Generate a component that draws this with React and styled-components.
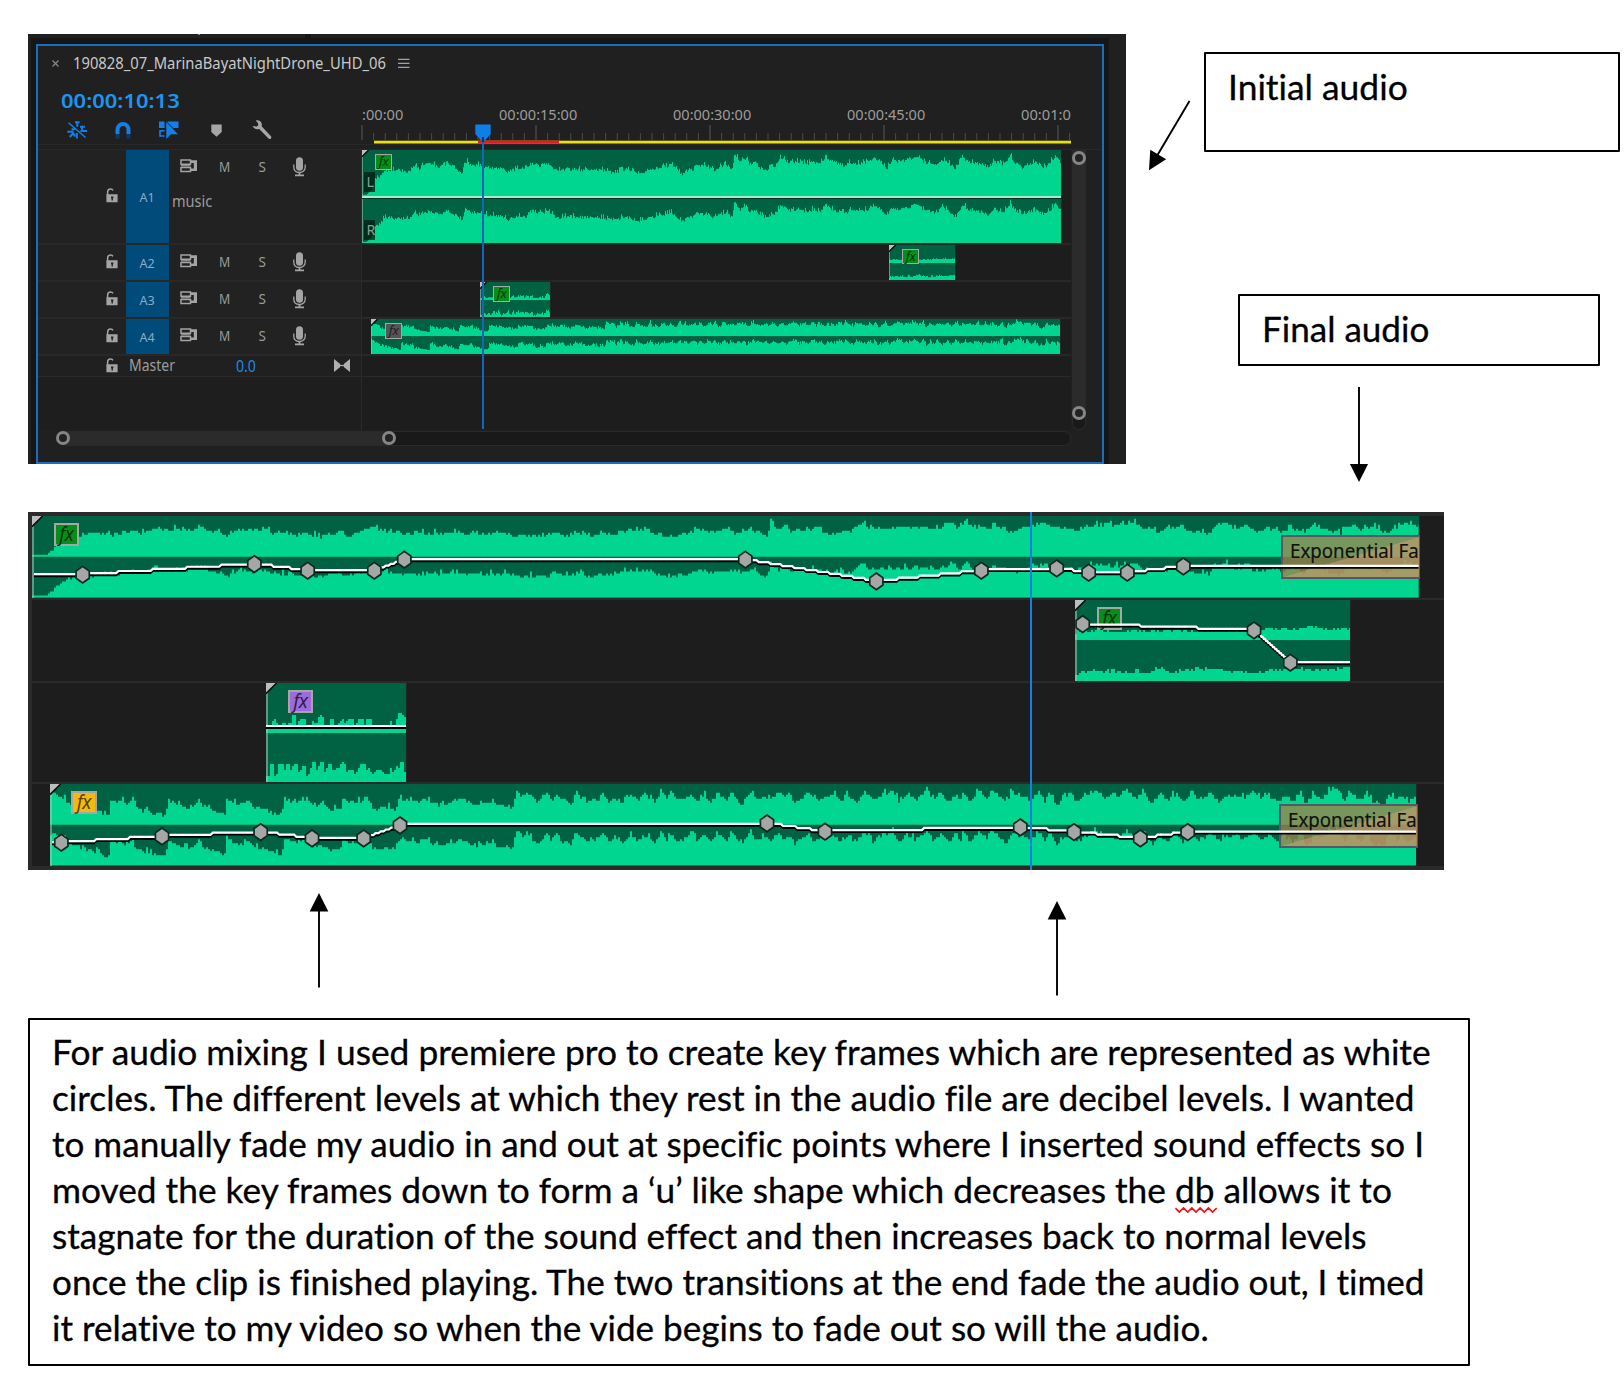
import React, { useLayoutEffect, useRef, useState } from "react";
import styled, { createGlobalStyle } from "styled-components";

const DARK = "#006242";
const LIGHT = "#00d690";

const GlobalStyle = createGlobalStyle`
  *, *::before, *::after { box-sizing: border-box; }
  html, body { margin: 0; padding: 0; background: #fff; }
  svg { display: block; flex: none; }
`;

/* ---------- text that is condensed to a measured width ---------- */

const FitBox = styled.span`
  display: block;
  flex: none;
  width: ${(p) => p.$w}px;
  white-space: nowrap;
`;
const FitInner = styled.span`
  display: inline-block;
  transform-origin: 0 50%;
  white-space: nowrap;
`;
function Fit({ w, children }) {
  const ref = useRef(null);
  const [scale, setScale] = useState(1);
  useLayoutEffect(() => {
    if (ref.current) setScale(w / ref.current.offsetWidth);
  }, [w]);
  return (
    <FitBox $w={w}>
      <FitInner ref={ref} style={{ transform: `scaleX(${scale})` }}>{children}</FitInner>
    </FitBox>
  );
}

/* ---------- waveform data ---------- */

const trace = (originX, base, str) =>
  str.trim().split(/\s+/).map((p) => {
    const [x, y] = p.split(",").map(Number);
    return [originX + x / 3, (base - y) / 3];
  });

const MUSIC_SMALL = [
  ...trace(360, 318, `8,315 20,314 35,300 46,262 60,258 75,240 95,240 120,240 148,246 155,232 165,228 180,236 186,222 220,222 232,230 245,228 256,226 260,211 270,225 285,230 300,246 308,246 312,224 322,214 335,225 365,225 375,230 390,232 408,235 425,234 442,248 455,240 475,236 500,236 510,222 525,218 535,226 565,222 575,230 600,240 625,236 650,238 670,240 700,236 740,244 760,246 800,238 830,248 855,250 865,234 880,240 900,228 915,230 935,224 945,234 955,244 968,252 985,238 1000,238 1010,222 1030,228 1045,226 1050,236 1065,240 1080,230 1100,224 1118,238 1123,190 1130,198 1140,215 1150,210 1160,205 1169,222`),
  ...trace(750, 318, `0,220 20,216 30,232 50,238 75,228 95,200 110,214 130,218 150,212 170,222 190,214 210,222 228,196 240,212 265,220 285,226 300,218 330,220 350,216 370,202 395,215 412,234 425,210 450,214 475,208 505,197 520,216 545,222 560,226 575,208 590,214 618,236 640,200 655,214 670,220 700,222 715,232 735,212 760,226 782,196 795,216 820,232 840,220 865,218 885,232 900,218 918,196 930,215`),
];

const MUSIC_LARGE = [
  ...trace(20, 155, `36,150 80,150 84,143 100,135 108,120 140,100 180,90 200,84 215,90 240,84 260,88 310,86 330,80 345,75 360,82 375,84 390,70 410,68 430,74 470,72 500,74 520,72 545,64 560,72 590,78 610,84 625,94 640,80 655,72 685,76 740,72 755,82 775,80 800,88 815,82 835,92 850,80 900,94 920,88 950,84 962,78 985,90 1010,82 1030,74 1065,70 1100,76 1140,86 1200,84 1250,84 1310,76 1330,86 1379,84`),
  ...trace(480, 155, `0,90 20,84 80,82 110,92 160,90 200,94 220,80 260,88 300,82 340,95 365,84 390,88 430,78 450,74 490,74 500,68 520,80 560,95 600,86 620,88 650,70 690,80 740,74 770,86 815,70 840,84 864,90 868,65 872,42 885,60 900,76 915,55 935,80 950,68 985,76 1010,64 1030,80 1055,88 1080,76 1115,80 1130,62 1148,48 1165,68 1200,66 1230,70 1260,64 1300,66 1330,64 1360,70 1400,60 1418,46 1435,70`),
  ...trace(960, 155, `0,68 20,48 40,72 60,64 80,70 115,60 140,76 180,74 215,62 250,54 280,64 320,66 350,76 385,60 430,58 480,60 530,52 550,72 560,66 590,80 625,70 660,62 690,76 745,86 765,66 795,48 820,70 860,60 890,78 930,68 960,80 1000,68 1035,78 1065,52 1090,72 1140,84 1165,62 1200,70 1250,66 1280,82 1310,66 1335,48 1375,65`),
];

const AMBIENCE = [
  ...trace(20, 960, `90,865 105,862 120,875 135,880 150,905 165,900 225,920 240,918 255,930 268,934 270,884 285,890 300,884 320,896 340,880 348,912 370,916 400,925 440,932 443,884 455,890 480,900 500,905 520,905 537,885 555,910 580,915 600,925 615,925 618,880 635,885 655,900 690,886 697,905 730,912 760,925 788,928 792,880 815,888 840,890 865,885 885,905 910,898 930,912 962,912 968,880 990,890 1020,888 1045,888 1060,905 1075,915 1100,905 1130,912 1138,880 1160,885 1200,892 1230,878 1235,895 1275,900 1320,880 1345,890 1370,902 1379,900`),
  ...trace(480, 960, `0,896 30,890 60,905 104,905 106,850 116,862 130,876 150,866 170,895 190,880 200,858 215,892 232,865 250,892 278,895 288,855 300,875 320,885 355,885 372,860 385,890 410,880 425,895 455,870 475,885 495,868 525,892 547,855 560,885 577,868 600,890 635,862 650,885 672,868 690,890 720,865 740,885 755,860 775,890 790,898 808,860 830,880 860,875 875,885 895,862 915,880 930,868 945,895 985,860 1000,882 1050,878 1060,865 1080,890 1103,868 1130,892 1155,860 1180,890 1200,870 1240,858 1260,892 1280,865 1310,885 1338,855 1360,885 1385,868 1410,892 1430,865`),
  ...trace(960, 960, `0,890 10,865 30,890 60,855 80,880 97,853 120,880 140,890 155,862 190,875 215,885 240,860 255,890 270,862 290,898 330,865 350,885 375,875 410,855 435,880 450,868 470,880 500,855 530,878 555,862 575,900 595,870 620,885 645,868 670,890 700,862 720,890 755,862 775,888 800,870 830,875 860,880 880,862 905,885 925,868 950,890 975,870 1000,890 1025,855 1035,895 1050,895 1060,868 1085,880 1110,855 1140,858 1155,885 1170,856 1200,885 1220,865 1240,895 1275,900 1285,862 1310,885 1325,868 1345,895 1368,868`),
];
const AMBIENCE_SMALL = AMBIENCE.map(([x, h]) => [371 + ((x - 50) * 689) / 1366, h * 0.42]);

const EFFECT_L = trace(20, 683, `738,665 755,665 758,645 770,640 772,662 788,662 790,640 797,662 815,650 818,632 828,632 830,660 842,642 855,640 857,665 872,665 875,642 890,655 895,640 905,625 912,640 914,660 928,660 930,640 942,640 945,660 962,650 966,632 975,655 988,640 1003,640 1005,660 1018,640 1032,640 1034,660 1042,640 1053,640 1055,662 1085,662 1112,655 1114,640 1120,660 1130,655 1132,630 1141,620 1150,628 1157,640`);
const EFFECT_R = trace(20, 831, `738,812 748,812 750,780 763,780 765,812 775,800 777,780 790,780 792,812 798,780 808,780 812,795 822,780 834,780 836,805 848,785 858,785 860,812 872,808 874,774 886,774 888,802 900,774 910,774 912,805 925,780 937,780 940,800 960,785 966,768 975,776 978,802 990,790 1003,800 1006,812 1020,780 1035,780 1037,805 1048,785 1055,808 1075,792 1090,800 1105,812 1112,785 1120,800 1135,780 1139,795 1141,774 1150,774 1152,800 1157,800`);
const EFFECT_SMALL = EFFECT_L.map(([x, h]) => [480 + (x - 266) * 0.5, h * 0.3]);
const DRONE_L = trace(960, 405, `345,398 350,378 400,376 470,380 560,378 700,378 860,376 920,372 1000,372 1038,370 1042,362 1058,364 1064,371 1130,374 1169,370`);
const DRONE_R = trace(960, 528, `345,522 352,512 362,500 400,498 480,500 520,504 532,492 545,506 570,502 590,490 640,502 700,494 760,492 800,498 890,504 925,496 1000,492 1080,496 1140,492 1169,486`);
const shrink = (pts) => pts.map(([x, h]) => [888.5 + (x - 1075) * 0.24, h * 0.38]);

function levelAt(pts, x) {
  if (x <= pts[0][0]) return pts[0][1];
  for (let i = 1; i < pts.length; i++) {
    if (x <= pts[i][0]) {
      const [ax, ay] = pts[i - 1];
      const [bx, by] = pts[i];
      return ay + ((by - ay) * (x - ax)) / (bx - ax || 1);
    }
  }
  return pts[pts.length - 1][1];
}

function wavePath({ pts, base, noise = 0, seed = 7 }, x0, width, step) {
  let s = seed * 7919;
  let d = `M0 ${base}`;
  for (let x = 0; x < width; x += step) {
    s = (s * 1103515245 + 12345) % 2147483648;
    const r = s / 2147483648;
    const quiet = levelAt(pts, x0 + x) < 6 && noise > 1;
    const jitter = quiet ? 0 : (r - 0.5) * 2 * noise + (r > 0.9 ? noise * 0.9 : 0);
    const raw = levelAt(pts, x0 + x + step / 2) + jitter;
    const h = Math.max(0.8, step > 1 ? Math.round(raw / 2) * 2 : Math.round(raw * 1.5) / 1.5);
    d += `V${(base - h).toFixed(1)}H${Math.min(width, x + step)}`;
  }
  return `${d}V${base}Z`;
}

function Wave({ x0, width, height, channels, step }) {
  return (
    <svg width={width} height={height} viewBox={`0 0 ${width} ${height}`}>
      {channels.map((c, i) => (
        <path key={i} d={wavePath(c, x0, width, step)} fill={LIGHT} />
      ))}
    </svg>
  );
}

/* ---------- clips ---------- */

const ClipBox = styled.div`
  position: relative;
  flex: none;
  width: ${(p) => p.$w}px;
  height: ${(p) => p.$h}px;
  margin-left: ${(p) => p.$start}px;
  background: ${DARK};
  box-shadow: 1px 0 0 #262626;
  &::before {
    content: "";
    position: absolute;
    left: 0;
    top: 0;
    bottom: 0;
    width: ${(p) => (p.$big ? 2 : 1)}px;
    background: #a9c9bc;
    opacity: 0.55;
  }
`;
const Fold = styled.svg`
  position: absolute;
  left: 0;
  top: 0;
`;
const FxBadge = styled.span`
  position: absolute;
  left: ${(p) => p.$x}px;
  top: ${(p) => p.$y}px;
  width: ${(p) => (p.$big ? 25.5 : 17)}px;
  height: ${(p) => (p.$big ? 23.5 : 15.5)}px;
  border: ${(p) => (p.$big ? 2 : 1.5)}px solid #a6a6a6;
  background: ${(p) => p.$bg};
  color: ${(p) => p.$ink || "#04360b"};
  font: italic ${(p) => (p.$big ? 19 : 13)}px/${(p) => (p.$big ? 19 : 12)}px "Noto Sans", sans-serif;
  text-align: center;
  letter-spacing: -0.5px;
`;
const Overlay = styled.svg`
  position: absolute;
  left: 0;
  top: 0;
`;
const ChannelTag = styled.span`
  position: absolute;
  left: 2px;
  top: ${(p) => p.$y}px;
  width: 11px;
  height: 20px;
  background: rgba(0, 30, 18, 0.78);
  color: #86a395;
  font: 14px/20px "Noto Sans", sans-serif;
  padding-left: 2.500px;
`;
const LevelLine = styled.span`
  position: absolute;
  left: 0;
  right: 0;
  top: ${(p) => p.$y}px;
  height: ${(p) => (p.$big ? 4 : 3)}px;
  background: linear-gradient(${(p) => (p.$big ? "#fff 0 2px, #000 2px" : "#a8eacb 0 2px, #00301f 2px")});
`;
const Transition = styled.div`
  position: absolute;
  left: ${(p) => p.$x}px;
  top: ${(p) => p.$y}px;
  width: ${(p) => p.$w}px;
  height: 44px;
  border: 2px solid #5c5566;
  border-right-width: 1px;
  background: linear-gradient(to bottom right, rgba(160, 129, 74, 0.75) 50%, rgba(187, 147, 100, 0.88) 50.5%);
  color: #111;
  font: 19.500px/27px "Noto Sans", sans-serif;
  padding-left: 7px;
  -webkit-text-stroke: 0.2px #111;
`;

function Clip({ start, x0, w, h, step = 1, channels, fx, big, children }) {
  const f = big ? 10 : 6;
  return (
    <ClipBox $start={start} $w={w} $h={h} $big={big}>
      <Wave x0={x0} width={w} height={h} channels={channels} step={step} />
      {children}
      <Fold width={f + 3} height={f + 3}>
        <path d={`M0 0H${f}L0 ${f}Z`} fill="#bdbdbd" />
        <path d={`M${f + 0.7} 0L0 ${f + 0.7}`} stroke="#04140d" strokeWidth={big ? 1.6 : 1.3} />
      </Fold>
      {fx && !big && <FxBadge $x={fx.x} $y={fx.y} $bg={fx.bg} $ink={fx.ink}>fx</FxBadge>}
    </ClipBox>
  );
}

function Envelope({ w, h, x0, y0, keys, endX, startX }) {
  const all = [[startX, keys[0][1]], ...keys, [endX, keys[keys.length - 1][1]]].map(([x, y]) => [x - x0, y - y0]);
  let d = "";
  for (let i = 1; i < all.length; i++) {
    const [ax, ay] = all[i - 1];
    const [bx, by] = all[i];
    const n = Math.max(1, Math.round(Math.abs(by - ay) / 2));
    if (i === 1) d += `M${ax} ${ay}`;
    for (let k = 0; k < n; k++) {
      const xe = ax + ((bx - ax) * (k + 1)) / n;
      const yk = ay + ((by - ay) * (k + 0.5)) / n;
      const ramp = Math.min(1.5, (bx - ax) / n / 3);
      d += Math.abs(by - ay) < 1 ? `L${bx} ${by}` : `L${ax + ((bx - ax) * k) / n + ramp} ${yk}L${xe - ramp / 2} ${yk}`;
    }
    d += `L${bx} ${by}`;
  }
  return (
    <Overlay width={w} height={h}>
      <path d={d} fill="none" stroke="#000" strokeWidth="2" transform="translate(0 1.2)" />
      <path d={d} fill="none" stroke="#fff" strokeWidth="2.2" transform="translate(0 -0.8)" />
      {keys.map(([x, y]) => (
        <path
          key={x}
          transform={`translate(${x - x0} ${y - y0 - 0.3})`}
          d="M0 -8.3L6.6 -3.6V3.6L0 8.3L-6.6 3.6V-3.6Z"
          fill="#a6a6a6"
          stroke="#0b2a1d"
          strokeWidth="1.7"
        />
      ))}
    </Overlay>
  );
}

/* ---------- icons ---------- */

const LockIcon = () => (
  <svg width="12" height="15" viewBox="0 0 12 15">
    <path d="M1.6 7V4.2C1.6 2 3 1 4.6 1C5.8 1 6.6 1.5 7 2.3" fill="none" stroke="#a4a4a4" strokeWidth="1.5" />
    <path fillRule="evenodd" d="M0.4 6.3H11.6V14.3H0.4ZM5 8.4V10L5.5 10.5V12.5H6.9V10.5L7.4 10V8.4Z" fill="#a4a4a4" />
  </svg>
);
const SourceIcon = () => (
  <svg width="18" height="14" viewBox="0 0 18 14">
    <path d="M1 1H10.500V5.200H1ZM1 8.400H10.500V12.600H1Z" fill="none" stroke="#a4a4a4" strokeWidth="1.500" />
    <path d="M1 6.800H10.500" stroke="#a4a4a4" strokeWidth="1.200" />
    <path fillRule="evenodd" d="M10 1.200H17V12H10V9.500H13.800V4H10Z" fill="#a4a4a4" />
  </svg>
);
const MicIcon = () => (
  <svg width="13" height="20" viewBox="0 0 13 20">
    <rect x="3" y="0.3" width="7" height="13.4" rx="3.5" fill="#a4a4a4" />
    <path d="M0.8 7.5V10C0.8 13.5 3.3 15.5 6.5 15.5S12.2 13.5 12.2 10V7.5" fill="none" stroke="#a4a4a4" strokeWidth="1.3" />
    <path d="M5.6 15.5H7.4V17.6H11V19.2H2V17.6H5.6Z" fill="#a4a4a4" />
  </svg>
);
const BowtieIcon = () => (
  <svg width="16" height="13" viewBox="0 0 16 13">
    <path d="M0 0L6.2 5V8L0 13ZM16 0L9.8 5V8L16 13Z" fill="#b0b0b0" />
    <path d="M5 6.5H11" stroke="#b0b0b0" strokeWidth="1.2" />
  </svg>
);
const NestIcon = () => (
  <svg width="20" height="18" viewBox="0 0 20 18" fill="none" stroke="#1180ea">
    <path d="M1.5 1.8L18.5 16.5" strokeWidth="1.5" />
    <path d="M8 1.2H12.6M10.3 1V5.8M0.3 10.7H6.5M8 8.2H4.5M13 5.8H18M13.5 10H20M14 7.8H16M9.8 12V17.5M7.4 13V15.5M7 11.5L2.8 16" strokeWidth="2" />
  </svg>
);
const MagnetIcon = () => (
  <svg width="16" height="17" viewBox="0 0 16 17">
    <path d="M2.5 12V8C2.5 4.4 4.9 2 8 2S13.500 4.400 13.500 8V12" fill="none" stroke="#1180ea" strokeWidth="4" />
    <path d="M0.500 12H4.500V16.500H0.500ZM11.500 12H15.500V16.500H11.500Z" fill="#0c3a68" />
  </svg>
);
const LinkedIcon = () => (
  <svg width="20" height="18" viewBox="0 0 20 18">
    <path d="M0 0.500H5.500V7H0ZM8.500 0.500H19.500V7H14.500L8.500 1.500Z" fill="#1180ea" />
    <path d="M5.500 9.800H1V15H5.500" fill="none" stroke="#1180ea" strokeWidth="1.600" />
    <path d="M7.300 1V18L11.800 13.300H19Z" fill="#1180ea" />
  </svg>
);
const MarkerIcon = () => (
  <svg width="11" height="13" viewBox="0 0 11 13">
    <path d="M0.300 0.500H10.700V8L5.500 12.700L0.300 8Z" fill="#a6a6a6" />
  </svg>
);
const WrenchIcon = () => (
  <svg width="20" height="20" viewBox="0 0 20 20">
    <path d="M3.800 0.600C6.200 -0.200 9.300 1 9.800 4C9.900 4.900 9.800 5.600 9.600 6.300L19 16.200C19.600 17 19.400 17.900 18.900 18.500C18.200 19.200 17.200 19.200 16.500 18.500L7.200 9C4.500 9.800 1.600 8.700 0.600 6.100L4.800 6.500L6.300 5.200L6 3.200Z" fill="#a6a6a6" />
  </svg>
);
const MenuIcon = () => (
  <svg width="12" height="11" viewBox="0 0 12 11">
    <path d="M0 1.300H11.500M0 5.300H11.500M0 9.300H11.500" stroke="#a2a2a2" strokeWidth="1.300" />
  </svg>
);

/* ---------- initial timeline panel ---------- */

const TimelinePanel = styled.section`
  position: relative;
  flex: none;
  width: 1098px;
  height: 430px;
  padding: 6px 5px 0;
  background: #161616;
  border: solid #202020;
  border-width: 4px 17px 0 3px;
  font-family: "Noto Sans", sans-serif;
  color: #9b9b9b;
`;
const Frame = styled.div`
  position: relative;
  height: 420px;
  border: 2px solid #1b6dbd;
  background: #202020;
`;
const TabBar = styled.div`
  display: flex;
  align-items: center;
  height: 34px;
  padding-left: 13.500px;
  font-size: 16px;
  color: #c8c8c8;
`;
const CloseMark = styled.svg`
  margin-right: 14.500px;
`;
const TabName = styled.div`
  width: 325px;
`;
const HeaderRow = styled.div`
  display: flex;
  height: 70px;
  border-bottom: 1px solid #282828;
`;
const Controls = styled.div`
  width: 323px;
  height: 65px;
  border-bottom: 1px solid #282828;
`;
const Timecode = styled.div`
  padding-left: 22.500px;
  font-size: 20.500px;
  line-height: 41px;
  height: 40px;
  font-weight: 600;
  color: #1e94f2;
`;
const Tools = styled.div`
  display: flex;
  align-items: center;
  height: 20px;
  padding-left: 28.500px;
`;
const Tool = styled.span`
  display: flex;
  width: ${(p) => p.$w}px;
`;
const Ruler = styled.div`
  width: 710px;
  padding-top: 24px;
  height: 65px;
  overflow: hidden;
  border-bottom: 1px solid #282828;
`;
const RulerLabels = styled.div`
  display: flex;
  gap: 95.500px;
  padding-left: 1px;
  font-size: 15px;
  line-height: 21px;
  height: 21px;
  color: #9c9c9c;
`;
const TracksArea = styled.div`
  display: flex;
  height: 280px;
`;
const HeadColumn = styled.div`
  width: 323px;
  background: #1e1e1e;
`;
const LaneColumn = styled.div`
  width: 710px;
  border-left: 1px solid #2a2a2a;
  background: #1d1d1d;
`;
const TrackHead = styled.div`
  display: flex;
  height: ${(p) => p.$h}px;
  border-bottom: 2px solid #282828;
  background: #222;
`;
const LockCell = styled.div`
  display: flex;
  align-items: center;
  width: 88px;
  padding: 0 0 2px 68px;
`;
const TrackTag = styled.div`
  display: flex;
  align-items: center;
  width: 43px;
  background: #004b7a;
  color: #88abc6;
  font-size: 12.500px;
  padding: 2px 0 0 13.500px;
`;
const TrackBody = styled.div`
  flex: 1;
`;
const TrackButtons = styled.div`
  display: flex;
  align-items: center;
  height: 34px;
  padding-left: 11px;
  font-size: 13.500px;
`;
const TrackButton = styled.span`
  flex: none;
  width: ${(p) => p.$w}px;
`;
const SourceCell = styled.span`
  flex: none;
  width: 39px;
  padding-bottom: 2px;
`;
const TrackName = styled.div`
  padding-left: 3px;
  font-size: 16px;
  line-height: 35px;
`;
const MasterHead = styled.div`
  display: flex;
  align-items: center;
  height: 21px;
  border-bottom: 1px solid #2a2a2a;
  background: #202020;
  padding: 0 0 1px 68px;
  font-size: 15.500px;
  line-height: 18px;
`;
const MasterName = styled.div`
  padding: 0 0 1px 10.500px;
  width: 118px;
`;
const MasterValue = styled.div`
  width: 97.500px;
  padding-top: 1px;
  color: #1d8be4;
`;
const Lane = styled.div`
  display: flex;
  height: ${(p) => p.$h}px;
  border-bottom: 2px solid #282828;
`;
const MasterLane = styled.div`
  height: 21px;
  border-bottom: 1px solid #2a2a2a;
`;
const VScroll = styled.div`
  position: relative;
  width: 14px;
  height: 280px;
  margin-left: 1px;
  border: 1px solid #2a2a2a;
  border-radius: 0 0 7px 7px;
  background: linear-gradient(#2b2b2b 263px, #191919 263px);
`;
const HScroll = styled.div`
  position: relative;
  width: 1011px;
  height: 15px;
  margin: 0.500px 0 0 22px;
  border: 1px solid #2a2a2a;
  border-radius: 7px;
  background: linear-gradient(to right, #2b2b2b 328px, #191919 328px);
`;
const Knob = styled.span`
  position: absolute;
  left: ${(p) => p.$x}px;
  top: ${(p) => p.$y}px;
  width: 14px;
  height: 14px;
  border: 3px solid #868686;
  border-radius: 50%;
  background: #222;
`;
const Playhead = styled.svg`
  position: absolute;
  left: 437px;
  top: 78px;
`;
const StripGap = styled.span`
  position: absolute;
  left: 274px;
  top: -4px;
  width: 6px;
  height: 4px;
  background: #161616;
`;
const StripMark = styled.span`
  position: absolute;
  left: 167px;
  top: -4px;
  width: 2px;
  height: 1px;
  background: #8a8a8a;
`;

function RulerTicks() {
  const ticks = [];
  for (let i = 0; i <= 61; i++) {
    const major = i % 15 === 0;
    ticks.push(
      <path key={i} d={`M${(1 + i * 11.6).toFixed(1)} ${major ? 0 : 8}V15`} stroke={major ? "#585858" : "#4a4a4a"} strokeWidth="1" />
    );
  }
  return (
    <svg width="710" height="19">
      {ticks}
      <rect x="13" y="15.7" width="697" height="2.8" fill="#ebe00b" />
      <rect x="117" y="15.7" width="81" height="2.8" fill="#f01524" />
    </svg>
  );
}

const TRACKS = [
  { id: "A1", h: 95, name: "music" },
  { id: "A2", h: 37 },
  { id: "A3", h: 37 },
  { id: "A4", h: 37 },
];

function TrackHeader({ id, h, name }) {
  return (
    <TrackHead $h={h}>
      <LockCell><LockIcon /></LockCell>
      <TrackTag><Fit w={15}>{id}</Fit></TrackTag>
      <TrackBody>
        <TrackButtons>
          <SourceCell><SourceIcon /></SourceCell>
          <TrackButton $w={39.5}><Fit w={11}>M</Fit></TrackButton>
          <TrackButton $w={34}>S</TrackButton>
          <TrackButton $w={13}><MicIcon /></TrackButton>
        </TrackButtons>
        {name && <TrackName><Fit w={40}>{name}</Fit></TrackName>}
      </TrackBody>
    </TrackHead>
  );
}

const FX_GREEN = "#058f1a";

function InitialTimeline() {
  return (
    <TimelinePanel>
      <StripGap />
      <StripMark />
      <Frame>
        <TabBar>
          <CloseMark width="7" height="7" viewBox="0 0 7 7">
            <path d="M0.500 0.500L6.500 6.500M6.500 0.500L0.500 6.500" stroke="#8c8c8c" strokeWidth="1.100" />
          </CloseMark>
          <TabName><Fit w={313}>190828_07_MarinaBayatNightDrone_UHD_06</Fit></TabName>
          <MenuIcon />
        </TabBar>
        <HeaderRow>
          <Controls>
            <Timecode><Fit w={119}>00:00:10:13</Fit></Timecode>
            <Tools>
              <Tool $w={48}><NestIcon /></Tool>
              <Tool $w={44.5}><MagnetIcon /></Tool>
              <Tool $w={52}><LinkedIcon /></Tool>
              <Tool $w={41}><MarkerIcon /></Tool>
              <Tool $w={20}><WrenchIcon /></Tool>
            </Tools>
          </Controls>
          <Ruler>
            <RulerLabels>
              <Fit w={41}>:00:00</Fit>
              <Fit w={78.5}>00:00:15:00</Fit>
              <Fit w={78.5}>00:00:30:00</Fit>
              <Fit w={78.5}>00:00:45:00</Fit>
              <Fit w={50}>00:01:0</Fit>
            </RulerLabels>
            <RulerTicks />
          </Ruler>
        </HeaderRow>
        <TracksArea>
          <HeadColumn>
            {TRACKS.map((t) => <TrackHeader key={t.id} {...t} />)}
            <MasterHead>
              <LockIcon />
              <MasterName><Fit w={46}>Master</Fit></MasterName>
              <MasterValue><Fit w={20}>0.0</Fit></MasterValue>
              <BowtieIcon />
            </MasterHead>
          </HeadColumn>
          <LaneColumn>
            <Lane $h={95}>
              <Clip start={0} x0={362} w={699} h={93}
                fx={{ x: 13, y: 4, bg: FX_GREEN }}
                channels={[
                  { pts: MUSIC_SMALL, base: 46, noise: 1.9, seed: 3 },
                  { pts: MUSIC_SMALL.map(([x, h]) => [x, h * 0.98]), base: 93, noise: 1.9, seed: 11 },
                ]}>
                <LevelLine $y={46} />
                <ChannelTag $y={22}>L</ChannelTag>
                <ChannelTag $y={70}>R</ChannelTag>
              </Clip>
            </Lane>
            <Lane $h={37}>
              <Clip start={526.5} x0={888.5} w={66} h={35}
                fx={{ x: 13.5, y: 3.5, bg: FX_GREEN }}
                channels={[
                  { pts: shrink(DRONE_L), base: 18, noise: 0.4, seed: 5 },
                  { pts: shrink(DRONE_R), base: 35, noise: 0.7, seed: 6 },
                ]} />
            </Lane>
            <Lane $h={37}>
              <Clip start={118} x0={480} w={70} h={35}
                fx={{ x: 13, y: 4, bg: FX_GREEN }}
                channels={[
                  { pts: EFFECT_SMALL, base: 18, noise: 0.5, seed: 8 },
                  { pts: EFFECT_SMALL.map(([x, h]) => [x, h * 1.15]), base: 35, noise: 1, seed: 9 },
                ]} />
            </Lane>
            <Lane $h={37}>
              <Clip start={9} x0={371} w={689} h={35}
                fx={{ x: 14, y: 4, bg: "#565656", ink: "#222" }}
                channels={[
                  { pts: AMBIENCE_SMALL, base: 17, noise: 1.2, seed: 13 },
                  { pts: AMBIENCE_SMALL, base: 35, noise: 1.2, seed: 17 },
                ]} />
            </Lane>
            <MasterLane />
          </LaneColumn>
          <VScroll>
            <Knob $x={-1} $y={0} />
            <Knob $x={-1} $y={255} />
          </VScroll>
        </TracksArea>
        <HScroll>
          <Knob $x={-5} $y={-0.5} />
          <Knob $x={321} $y={-0.5} />
        </HScroll>
        <Playhead width="16" height="306">
          <path d="M7 14H9V305H7Z" fill="#1766b6" />
          <path d="M0.300 0.500H15.700V10L10 16.500H6L0.300 10Z" fill="#0f7fe8" />
          <path d="M7.200 13H8.800V18H7.200Z" fill="#07264a" />
        </Playhead>
      </Frame>
    </TimelinePanel>
  );
}

/* ---------- final mix panel ---------- */

const MixPanel = styled.section`
  position: relative;
  width: 1416px;
  height: 358px;
  margin-left: 28px;
  border: solid #2a2a2c;
  border-width: 4px 0 4px 4px;
  background: #1d1d1d;
`;
const MixLane = styled.div`
  display: flex;
  height: ${(p) => p.$h}px;
  border-bottom: ${(p) => (p.$last ? 0 : 2)}px solid #2a2a2c;
`;
const MixPlayhead = styled.span`
  position: absolute;
  left: 998px;
  top: -4px;
  bottom: -4px;
  width: 2px;
  background: #1380e6;
`;

const keys = (...groups) =>
  groups.flatMap(([ox, list]) => list.map(([x, y]) => [ox + x / 3, 505 + y / 3]));

const MUSIC_KEYS = keys(
  [20, [[188, 210], [703, 178], [863, 198], [1063, 198], [1153, 165]]],
  [480, [[796, 165], [1189, 230]]],
  [960, [[64, 198], [290, 191], [386, 204], [502, 204], [670, 185]]]
);
const DRONE_KEYS = keys([960, [[368, 358], [882, 377], [991, 474]]]);
const AMBIENCE_KEYS = keys(
  [20, [[124, 1014], [426, 995], [722, 982], [876, 1001], [1031, 1001], [1140, 962]]],
  [480, [[861, 956], [1035, 981]]],
  [960, [[181, 968], [342, 982], [541, 1001], [683, 982]]]
);

function FinalMix() {
  return (
    <MixPanel>
      <MixLane $h={84}>
        <Clip big start={0} x0={32} w={1386.5} h={82} step={2}
          channels={[
            { pts: MUSIC_LARGE, base: 40.7, noise: 1.9, seed: 21 },
            { pts: MUSIC_LARGE, base: 81.5, noise: 1.9, seed: 22 },
          ]}>
          <FxBadge $big $x={21.5} $y={6.5} $bg={FX_GREEN}>fx</FxBadge>
          <Transition $x={1249} $y={19} $w={139}><Fit w={128.5}>Exponential Fa</Fit></Transition>
          <Envelope w={1387} h={82} x0={32} y0={516} keys={MUSIC_KEYS} startX={34} endX={1418.5} />
        </Clip>
      </MixLane>
      <MixLane $h={83}>
        <Clip big start={1043} x0={1075} w={275} h={81} step={2}
          channels={[
            { pts: DRONE_L, base: 40, noise: 1, seed: 23 },
            { pts: DRONE_R, base: 81, noise: 1, seed: 24 },
          ]}>
          <FxBadge $big $x={21.5} $y={6.5} $bg={FX_GREEN}>fx</FxBadge>
          <Envelope w={275} h={81} x0={1075} y0={600} keys={DRONE_KEYS} startX={1080} endX={1350} />
        </Clip>
      </MixLane>
      <MixLane $h={101}>
        <Clip big start={234} x0={266} w={140} h={99} step={2}
          channels={[
            { pts: EFFECT_L, base: 50, seed: 25 },
            { pts: EFFECT_R, base: 99, seed: 26 },
          ]}>
          <FxBadge $big $x={21.5} $y={6.5} $bg="#9c6cdc" $ink="#2f1d4a">fx</FxBadge>
          <LevelLine $big $y={42} />
        </Clip>
      </MixLane>
      <MixLane $h={82} $last>
        <Clip big start={18} x0={50} w={1366} h={82} step={2}
          channels={[
            { pts: AMBIENCE, base: 40.7, noise: 2.1, seed: 27 },
            { pts: AMBIENCE, base: 81.3, noise: 2.1, seed: 28 },
          ]}>
          <FxBadge $big $x={21} $y={6.5} $bg="#f2b90f" $ink="#5a4200">fx</FxBadge>
          <Transition $x={1229} $y={19.5} $w={138.5}><Fit w={128.5}>Exponential Fa</Fit></Transition>
          <Envelope w={1366} h={82} x0={50} y0={784} keys={AMBIENCE_KEYS} startX={52} endX={1416} />
        </Clip>
      </MixLane>
      <MixPlayhead />
    </MixPanel>
  );
}

/* ---------- document ---------- */

const Page = styled.main`
  width: 1624px;
  height: 1382px;
  overflow: hidden;
  background: #fff;
  color: #000;
`;
const TopRow = styled.div`
  display: flex;
  height: 512px;
  padding-left: 28px;
`;
const PanelSlot = styled.div`
  padding-top: 34px;
`;
const Aside = styled.aside`
  flex: 1;
  padding-top: 52px;
`;
const CalloutRow = styled.div`
  display: flex;
  height: 120px;
`;
const PointerCell = styled.div`
  padding: ${(p) => p.$pad};
`;
const Note = styled.div`
  width: ${(p) => p.$w}px;
  height: ${(p) => p.$h}px;
  margin: ${(p) => p.$m || "0"};
  padding: 10px 0 0 22px;
  border: 2px solid #000;
  border-radius: 1px;
  font: 34px/46px Lato, "Liberation Sans", sans-serif;
  font-variant-ligatures: none;
  -webkit-text-stroke: 0.3px #000;
`;
const ArrowRow = styled.div`
  display: flex;
  height: 148px;
`;
const Explanation = styled.article`
  width: 1442px;
  height: 348px;
  margin-left: 28px;
  padding: 9px 0 0 22px;
  border: 2px solid #000;
  border-radius: 1px;
  font: 34px/45.93px Lato, "Liberation Sans", sans-serif;
  font-variant-ligatures: none;
  -webkit-text-stroke: 0.3px #000;
`;
const Misspelt = styled.span`
  position: relative;
`;
const Squiggle = styled.svg`
  position: absolute;
  left: 0;
  top: 37.500px;
`;

const UpArrow = () => (
  <svg width="20" height="95" viewBox="0 0 20 95">
    <path d="M10 17V94.500" stroke="#000" strokeWidth="1.900" />
    <path d="M10 0L19.300 18.500H0.700Z" />
  </svg>
);
const DownArrow = () => (
  <svg width="20" height="95" viewBox="0 0 20 95">
    <path d="M10 0V78" stroke="#000" strokeWidth="1.900" />
    <path d="M10 95L19.100 77H0.900Z" />
  </svg>
);
const DiagonalArrow = () => (
  <svg width="44" height="72" viewBox="0 0 44 72">
    <path d="M41.500 1L9.500 55" stroke="#000" strokeWidth="1.900" />
    <path d="M1 70.200L2.300 49.800L18.200 59.300Z" />
  </svg>
);

const LINES = [
  [1379, "For audio mixing I used premiere pro to create key frames which are represented as white"],
  [1362, "circles. The different levels at which they rest in the audio file are decibel levels. I wanted"],
  [1372, "to manually fade my audio in and out at specific points where I inserted sound effects so I"],
  [1340, <React.Fragment key="l">moved the key frames down to form a ‘u’ like shape which decreases the <Misspelt>db<Squiggle width="41" height="8" preserveAspectRatio="none"><path d="M0 2L4 6L8 2L12 6L16 2L20 6L24 2L28 6L32 2L36 6L40 2" fill="none" stroke="#f01010" strokeWidth="1.700" /></Squiggle></Misspelt> allows it to</React.Fragment>],
  [1315, "stagnate for the duration of the sound effect and then increases back to normal levels"],
  [1372, "once the clip is finished playing. The two transitions at the end fade the audio out, I timed"],
  [1157, "it relative to my video so when the vide begins to fade out so will the audio."],
];

export default function App() {
  return (
    <>
      <GlobalStyle />
      <Page>
        <TopRow>
          <PanelSlot><InitialTimeline /></PanelSlot>
          <Aside>
            <CalloutRow>
              <PointerCell $pad="48px 12px 0 22px"><DiagonalArrow /></PointerCell>
              <Note $w={416} $h={100}><Fit w={180}>Initial audio</Fit></Note>
            </CalloutRow>
            <Note $w={362} $h={72} $m="122px 0 0 112px"><Fit w={167}>Final audio</Fit></Note>
            <PointerCell $pad="21px 0 0 223px"><DownArrow /></PointerCell>
          </Aside>
        </TopRow>
        <FinalMix />
        <ArrowRow>
          <PointerCell $pad="23px 0 0 309px"><UpArrow /></PointerCell>
          <PointerCell $pad="31px 0 0 718px"><UpArrow /></PointerCell>
        </ArrowRow>
        <Explanation>
          {LINES.map(([w, text], i) => <Fit key={i} w={w}>{text}</Fit>)}
        </Explanation>
      </Page>
    </>
  );
}
